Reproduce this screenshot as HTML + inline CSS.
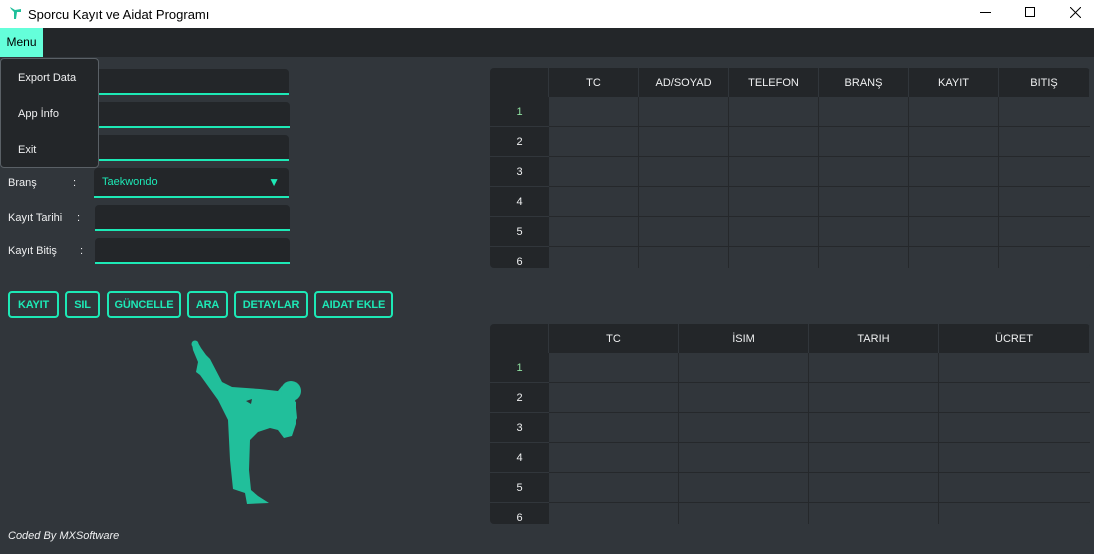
<!DOCTYPE html>
<html><head><meta charset="utf-8"><style>
*{margin:0;padding:0;box-sizing:border-box}
body{width:1094px;height:554px;overflow:hidden;background:#31363b;font-family:"Liberation Sans",sans-serif;position:relative;color:#eff0f1}
.a{position:absolute}
.title{left:0;top:0;width:1094px;height:28px;background:#fff;color:#000;font-size:13px}
.mbar{left:0;top:28px;width:1094px;height:29px;background:#232629}
.menu{left:0;top:28px;width:43px;height:29px;background:#64ffda;color:#000;font-size:12px;line-height:29px;text-align:center}
.field{background:#232629;border-bottom:2px solid #1de9b6;border-radius:4px 4px 0 0}
.lbl{font-size:11px;color:#eff0f1}
.btn{top:291px;height:27px;border:2px solid #1de9b6;border-radius:4px;color:#1de9b6;font-size:11px;font-weight:bold;text-align:center;line-height:25px;letter-spacing:-0.2px}
.tbl{background:#31363b;border-radius:4px;overflow:hidden}
.tbl div{position:absolute}
.hd{background:#232629;color:#eff0f1;font-size:11px;text-align:center;line-height:30px;border-right:1px solid #31363b}
.rh{background:#232629;color:#eff0f1;font-size:11px;text-align:center;line-height:30px;border-bottom:1px solid #31363b}
.dd{left:0;top:58px;width:99px;height:110px;background:#232629;border:1px solid #5a6066;border-radius:4px;font-size:11px}
.dd span{position:absolute;left:17px}
</style></head><body>
<div class="a title">
<svg class="a" style="left:9px;top:5px" width="14" height="16" viewBox="0 0 14 16"><path d="M1 2 L6 5 L12 4 L12 7 L8 7 L7 14 L5 14 L5 7 L2 4Z" fill="#1fbf9a"/></svg>
<span class="a" style="left:28px;top:7px">Sporcu Kayıt ve Aidat Programı</span>
<div class="a" style="left:980px;top:12px;width:11px;height:1px;background:#000"></div>
<div class="a" style="left:1025px;top:7px;width:10px;height:10px;border:1px solid #000"></div>
<svg class="a" style="left:1070px;top:7px" width="11" height="11"><path d="M0 0L11 11M11 0L0 11" stroke="#000" stroke-width="1"/></svg>
</div>
<div class="a mbar"></div>
<div class="a menu">Menu</div>

<div class="a field" style="left:95px;top:69px;width:194px;height:26px"></div>
<div class="a field" style="left:95px;top:102px;width:195px;height:26px"></div>
<div class="a field" style="left:95px;top:135px;width:194px;height:26px"></div>
<div class="a field" style="left:94px;top:168px;width:195px;height:30px"><span class="a" style="left:8px;top:8px;font-size:11px;color:#1de9b6">Taekwondo</span><span class="a" style="right:9px;top:7px;font-size:12px;color:#1de9b6">▼</span></div>
<div class="a field" style="left:95px;top:205px;width:195px;height:26px"></div>
<div class="a field" style="left:95px;top:238px;width:195px;height:26px"></div>
<span class="a lbl" style="left:8px;top:177px">Branş</span><span class="a lbl" style="left:73px;top:177px">:</span>
<span class="a lbl" style="left:8px;top:212px">Kayıt Tarihi</span><span class="a lbl" style="left:77px;top:212px">:</span>
<span class="a lbl" style="left:8px;top:245px">Kayıt Bitiş</span><span class="a lbl" style="left:80px;top:245px">:</span>

<div class="a dd"><span style="top:13px">Export Data</span><span style="top:49px">App İnfo</span><span style="top:85px">Exit</span></div>

<div class="a btn" style="left:8px;width:51px">KAYIT</div>
<div class="a btn" style="left:65px;width:35px">SIL</div>
<div class="a btn" style="left:107px;width:74px">GÜNCELLE</div>
<div class="a btn" style="left:187px;width:41px">ARA</div>
<div class="a btn" style="left:234px;width:74px">DETAYLAR</div>
<div class="a btn" style="left:314px;width:79px">AIDAT EKLE</div>

<svg class="a" style="left:0;top:0" width="400" height="554"><g fill="#21bf9b"><circle cx="195" cy="344" r="3.5"/><path d="M192 344 L197 341 L201 348 L206 355 L210 359 L222 382 L232 387 L260 389 L278 391 L282 386 L284 400 L296 402 L296 424 L292 436 L284 438 L278 430 L270 428 L258 432 L250 440 L249 470 L251 490 L258 496 L269 503 L247 504 L245 493 L233 489 L230 460 L228 420 L218 400 L200 375 L196 372 L198 362 L193 350 Z"/><circle cx="291" cy="391" r="10"/><path d="M282 388 L295 398 L297 418 L288 436 L282 430 Z"/></g><path d="M246 401 L252 399 L251 404 Z" fill="#31363b"/></svg>

<span class="a" style="left:8px;top:530px;font-size:11px;font-style:italic">Coded By MXSoftware</span>

<div class="a tbl" style="left:490px;top:68px;width:600px;height:200px">
<div class="hd" style="left:0;top:0;width:59px;height:29px"></div>
<div class="hd" style="left:59px;top:0;width:90px;height:29px">TC</div>
<div class="hd" style="left:149px;top:0;width:90px;height:29px">AD/SOYAD</div>
<div class="hd" style="left:239px;top:0;width:90px;height:29px">TELEFON</div>
<div class="hd" style="left:329px;top:0;width:90px;height:29px">BRANŞ</div>
<div class="hd" style="left:419px;top:0;width:90px;height:29px">KAYIT</div>
<div class="hd" style="left:509px;top:0;width:91px;height:29px">BITIŞ</div>
<div class="rh" style="left:0;top:29px;width:59px;height:30px;color:#8fe0a0">1</div>
<div class="rh" style="left:0;top:59px;width:59px;height:30px">2</div>
<div class="rh" style="left:0;top:89px;width:59px;height:30px">3</div>
<div class="rh" style="left:0;top:119px;width:59px;height:30px">4</div>
<div class="rh" style="left:0;top:149px;width:59px;height:30px">5</div>
<div class="rh" style="left:0;top:179px;width:59px;height:30px">6</div>
<svg style="position:absolute;left:59px;top:29px" width="541" height="171"><g stroke="#25282b" stroke-width="1"><path d="M89.5 0V171M179.5 0V171M269.5 0V171M359.5 0V171M449.5 0V171M0 29.5H541M0 59.5H541M0 89.5H541M0 119.5H541M0 149.5H541"/></g></svg>
</div>

<div class="a tbl" style="left:490px;top:324px;width:600px;height:200px">
<div class="hd" style="left:0;top:0;width:59px;height:29px"></div>
<div class="hd" style="left:59px;top:0;width:130px;height:29px">TC</div>
<div class="hd" style="left:189px;top:0;width:130px;height:29px">İSIM</div>
<div class="hd" style="left:319px;top:0;width:130px;height:29px">TARIH</div>
<div class="hd" style="left:449px;top:0;width:151px;height:29px">ÜCRET</div>
<div class="rh" style="left:0;top:29px;width:59px;height:30px;color:#8fe0a0">1</div>
<div class="rh" style="left:0;top:59px;width:59px;height:30px">2</div>
<div class="rh" style="left:0;top:89px;width:59px;height:30px">3</div>
<div class="rh" style="left:0;top:119px;width:59px;height:30px">4</div>
<div class="rh" style="left:0;top:149px;width:59px;height:30px">5</div>
<div class="rh" style="left:0;top:179px;width:59px;height:30px">6</div>
<svg style="position:absolute;left:59px;top:29px" width="541" height="171"><g stroke="#25282b" stroke-width="1"><path d="M129.5 0V171M259.5 0V171M389.5 0V171M0 29.5H541M0 59.5H541M0 89.5H541M0 119.5H541M0 149.5H541"/></g></svg>
</div>
</body></html>
